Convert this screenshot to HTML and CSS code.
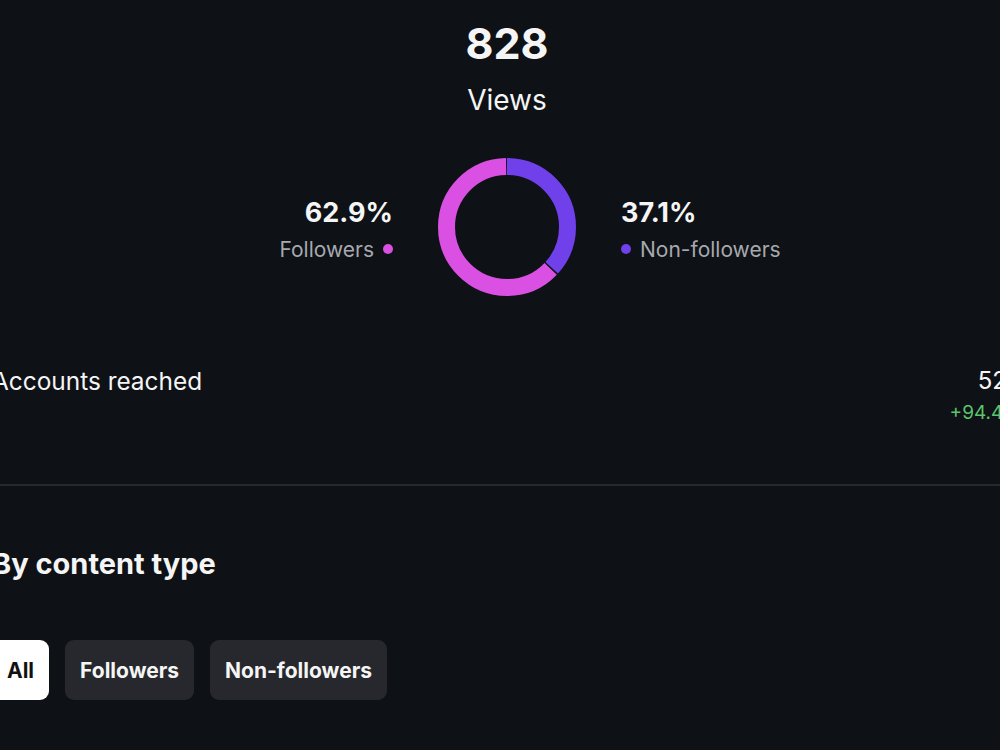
FILE: index.html
```html
<!DOCTYPE html>
<html lang="en">
<head>
    <meta charset="UTF-8">
    <meta name="viewport" content="width=device-width, initial-scale=1.0">
    <title>Views insights</title>
    <link rel="stylesheet" href="styles.css">
</head>
<body>
    <div class="page">
        <div class="summary">
            <div class="total">828</div>
            <div class="total-label">Views</div>
        </div>

        <div class="split">
            <div class="side side-left">
                <div class="pct">62.9%</div>
                <div class="legend">Followers <span class="dot dot-followers"></span></div>
            </div>
            <svg class="donut" width="138" height="138" viewBox="0 0 138 138">
                <!-- non-followers 37.1%, followers 62.9%, starting at 12 o'clock -->
                <circle cx="69" cy="69" r="60.5" fill="none" stroke="#7040ea" stroke-width="17"
                        stroke-dasharray="139.6 380.13" transform="rotate(-90 69 69)" />
                <circle cx="69" cy="69" r="60.5" fill="none" stroke="#d950e2" stroke-width="17"
                        stroke-dasharray="237.6 380.13" stroke-dashoffset="-141.03" transform="rotate(-90 69 69)" />
            </svg>
            <div class="side side-right">
                <div class="pct">37.1%</div>
                <div class="legend"><span class="dot dot-non"></span> Non-followers</div>
            </div>
        </div>

        <div class="metric-row">
            <div class="metric-name">Accounts reached</div>
            <div class="metric-values">
                <div class="metric-value">524</div>
                <div class="metric-change">+94.4%</div>
            </div>
        </div>

        <div class="divider"></div>

        <h2 class="section-title">By content type</h2>

        <div class="filters">
            <button class="pill active">All</button>
            <button class="pill">Followers</button>
            <button class="pill">Non-followers</button>
        </div>
    </div>
</body>
</html>
```

FILE: styles.css
```css
html, body {
    margin: 0;
    padding: 0;
    background-color: #0e1116;
    overflow: hidden;
}
body {
    font-family: Inter, "Noto Sans", sans-serif;
    color: #f5f5f5;
    width: 1000px;
    height: 750px;
}
.page {
    width: 1030px;
    margin-left: -8px;
}
.summary {
    text-align: center;
    padding-top: 22px;
}
.total {
    font-size: 43px;
    font-weight: 700;
    line-height: 1;
}
.total-label {
    font-size: 28px;
    line-height: 1;
    margin-top: 21px;
}
.split {
    display: grid;
    grid-template-columns: 1fr auto 1fr;
    align-items: center;
    column-gap: 45px;
    margin-top: 44px;
}
.side {
    padding-top: 4px;
}
.side-left {
    justify-self: end;
    text-align: right;
}
.side-right {
    justify-self: start;
}
.pct {
    font-size: 27px;
    font-weight: 700;
    line-height: 1;
}
.legend {
    font-size: 21px;
    line-height: 1;
    color: #a7a9ae;
    margin-top: 13px;
    display: flex;
    align-items: center;
    gap: 6px;
}
.side-left .legend {
    justify-content: flex-end;
}
.dot {
    display: inline-block;
    width: 10px;
    height: 10px;
    border-radius: 50%;
}
.dot-followers {
    background-color: #d950e2;
    margin-left: 3px;
}
.dot-non {
    background-color: #7040ea;
    margin-right: 3px;
}
.donut {
    display: block;
}
.metric-row {
    display: flex;
    justify-content: space-between;
    align-items: flex-start;
    margin-top: 73px;
}
.metric-name {
    font-size: 24.4px;
    line-height: 1;
}
.metric-values {
    text-align: right;
}
.metric-value {
    font-size: 24px;
    line-height: 1;
}
.metric-change {
    font-size: 19px;
    line-height: 1;
    color: #5cc46b;
    margin-top: 10px;
}
.divider {
    height: 2px;
    background-color: #25282d;
    margin-top: 62px;
}
.section-title {
    font-size: 29px;
    font-weight: 700;
    line-height: 1;
    margin: 63px 0 0;
}
.filters {
    display: flex;
    gap: 16px;
    margin-top: 62px;
}
.pill {
    font-family: inherit;
    font-size: 21px;
    font-weight: 700;
    height: 60px;
    padding: 0 15px;
    border: none;
    border-radius: 9px;
    background-color: #26282d;
    color: #f5f5f5;
}
.pill.active {
    background-color: #ffffff;
    color: #111;
}
```
